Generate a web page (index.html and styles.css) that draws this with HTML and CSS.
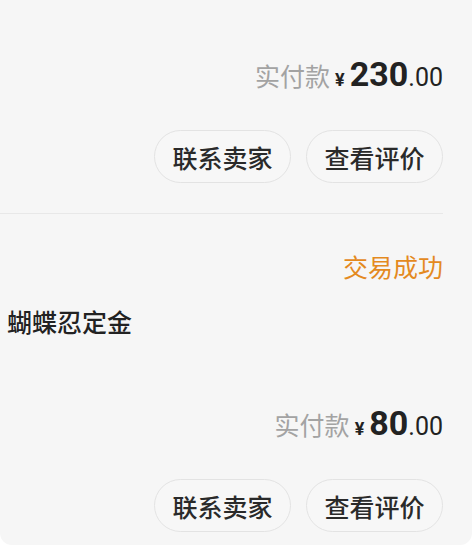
FILE: index.html
```html
<!DOCTYPE html>
<html>
<head>
  <title>我的订单</title>
  <link rel="stylesheet" href="styles.css">
</head>
<body>
  <div class="card">
    <!-- 第一笔订单（上半部分已滚出屏幕） -->
    <div class="order first">
      <div class="price-row">
        <span class="price-label">实付款</span>
        <span class="yen">¥</span>
        <span class="price-int">230</span>
        <span class="price-dec">.00</span>
      </div>
      <div class="actions">
        <button class="btn">联系卖家</button>
        <button class="btn">查看评价</button>
      </div>
    </div>

    <!-- 第二笔订单 -->
    <div class="order last">
      <div class="status">交易成功</div>
      <div class="title">蝴蝶忍定金</div>
      <div class="price-row">
        <span class="price-label">实付款</span>
        <span class="yen">¥</span>
        <span class="price-int">80</span>
        <span class="price-dec">.00</span>
      </div>
      <div class="actions">
        <button class="btn">联系卖家</button>
        <button class="btn">查看评价</button>
      </div>
    </div>
  </div>
</body>
</html>
```

FILE: styles.css
```css
/* 页面：白底，无边距 */
body {
  margin: 0;
  background: #ffffff;
  font-family: Roboto, "Noto Sans CJK SC", sans-serif;
}

/* 订单卡片：浅灰底，底部圆角 */
.card {
  background: #f6f6f6;
  border-radius: 0 0 12px 12px;
  height: 545px;
  overflow: hidden;
}

.order {
  padding-left: 7px;
  margin-right: 29px;
}

.order.first {
  padding-top: 54px;
  padding-bottom: 30px;
  border-bottom: 1px solid #e8e8e8;
}

.order.last {
  padding-top: 39px;
}

/* 订单状态 */
.status {
  text-align: right;
  color: #e48a1f;
  font-size: 25px;
  line-height: 32px;
}

/* 商品名称 */
.title {
  margin-top: 23px;
  color: #222;
  font-size: 25px;
  font-weight: 500;
  line-height: 32px;
}

.order.last .price-row {
  margin-top: 63px;
}

/* 实付款一行 */
.price-row {
  display: flex;
  justify-content: flex-end;
  align-items: baseline;
  height: 40px;
  line-height: 40px;
  color: #222;
}

.price-label {
  color: #a3a3a3;
  font-size: 25px;
}

.yen {
  font-size: 18px;
  font-weight: 700;
  margin: 0 5px 0 5px;
}

.price-int {
  font-size: 34px;
  font-weight: 700;
}

.price-dec {
  font-size: 25px;
}

/* 按钮 */
.actions {
  display: flex;
  justify-content: flex-end;
  gap: 15px;
  margin-top: 36px;
}

.btn {
  width: 137px;
  height: 53px;
  padding: 0;
  border: 1px solid #e3e3e3;
  border-radius: 27px;
  background: #f7f7f7;
  color: #2a2a2a;
  font-family: Roboto, "Noto Sans CJK SC", sans-serif;
  font-size: 25px;
  font-weight: 500;
}
```
